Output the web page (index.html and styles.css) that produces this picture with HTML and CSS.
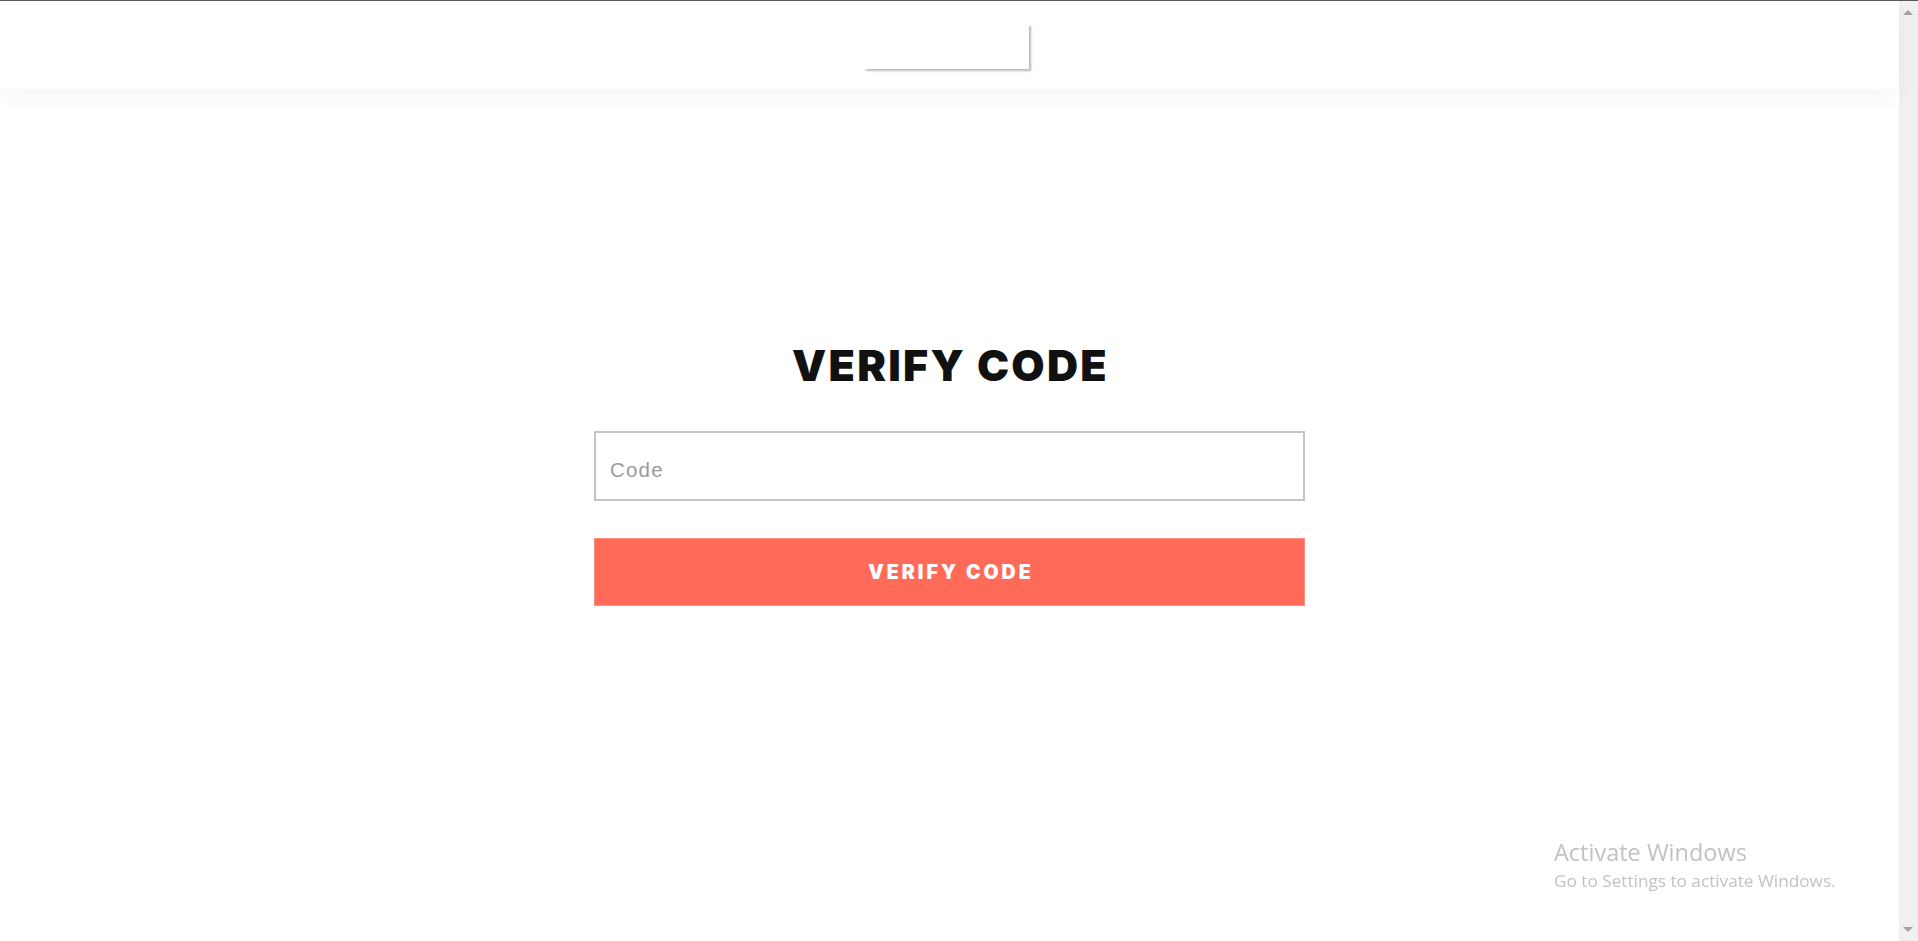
FILE: index.html
```html
<!DOCTYPE html>
<html lang="en">
<head>
<meta charset="utf-8">
<title>Verify Code</title>
<link rel="stylesheet" href="styles.css">
</head>
<body>
<div class="window">
  <div class="page">
    <header class="header">
      <div class="logo-box"></div>
    </header>
    <main class="main">
      <form class="verify-form">
        <h1 class="title">VERIFY CODE</h1>
        <input class="code-input" type="text" placeholder="Code">
        <button class="verify-btn" type="button">VERIFY CODE</button>
      </form>
    </main>
  </div>
  <div class="scrollbar">
    <span class="arrow arrow-up"></span>
    <span class="arrow arrow-down"></span>
  </div>
</div>
<div class="watermark">
  <div class="wm-title">Activate Windows</div>
  <div class="wm-sub">Go to Settings to activate Windows.</div>
</div>
</body>
</html>
```
FILE: styles.css
```css
html, body {
  margin: 0;
  padding: 0;
  height: 100%;
  background: #fff;
  font-family: "Liberation Sans", Arial, sans-serif;
  overflow: hidden;
}

.window {
  display: flex;
  height: 100%;
  border-top: 1px solid #5a5a5a;
  box-sizing: border-box;
}

.page {
  flex: 1;
  display: flex;
  flex-direction: column;
  min-width: 0;
}

.header {
  height: 88px;
  display: flex;
  justify-content: center;
  align-items: flex-start;
  background: #fff;
  box-shadow: 0 6px 24px rgba(0, 0, 0, 0.045);
  position: relative;
  z-index: 1;
}

.logo-box {
  width: 165px;
  height: 45px;
  margin-top: 23px;
  margin-right: 7px;
  background: #fff;
  box-shadow: 2px 2px 2px rgba(0, 0, 0, 0.28);
}

.main {
  flex: 1;
  display: flex;
  justify-content: center;
}

.verify-form {
  width: 711px;
  display: flex;
  flex-direction: column;
  align-items: stretch;
  padding-top: 255px;
}

.title {
  margin: 0;
  text-align: center;
  font-family: Inter, "Liberation Sans", sans-serif;
  font-size: 43px;
  line-height: 43px;
  font-weight: 900;
  letter-spacing: 2.3px;
  padding-left: 2px;
  color: #111;
}

.code-input {
  margin-top: 44px;
  height: 70px;
  box-sizing: border-box;
  border: 2px solid #c4c4c4;
  padding: 8px 14px 0;
  font-family: "Liberation Sans", Arial, sans-serif;
  font-size: 20.5px;
  letter-spacing: 1.2px;
  color: #333;
  outline: none;
  background: #fff;
}

.code-input::placeholder {
  color: #9a9a9a;
}

.verify-btn {
  margin-top: 37px;
  height: 68px;
  border: 1px solid #ff8e7f;
  background: #ff6b58;
  color: #fff;
  font-family: Inter, "Liberation Sans", sans-serif;
  font-size: 19.5px;
  font-weight: 900;
  letter-spacing: 3px;
  padding: 0 0 0 3px;
  cursor: pointer;
}

.scrollbar {
  width: 19px;
  background: #f0f0f0;
  position: relative;
  flex-shrink: 0;
}

.arrow {
  position: absolute;
  left: 4px;
  width: 0;
  height: 0;
  border-left: 5px solid transparent;
  border-right: 5px solid transparent;
}

.arrow-up {
  top: 9px;
  border-bottom: 5px solid #a3a3a3;
}

.arrow-down {
  bottom: 9px;
  border-top: 5px solid #a3a3a3;
}

.watermark {
  position: fixed;
  left: 1554px;
  top: 837px;
  color: #c2c2c2;
  font-family: "Open Sans", "Noto Sans", sans-serif;
}

.wm-title {
  font-size: 23.5px;
  line-height: 30px;
}

.wm-sub {
  font-size: 17.2px;
  line-height: 22px;
  margin-top: 3px;
}
```
